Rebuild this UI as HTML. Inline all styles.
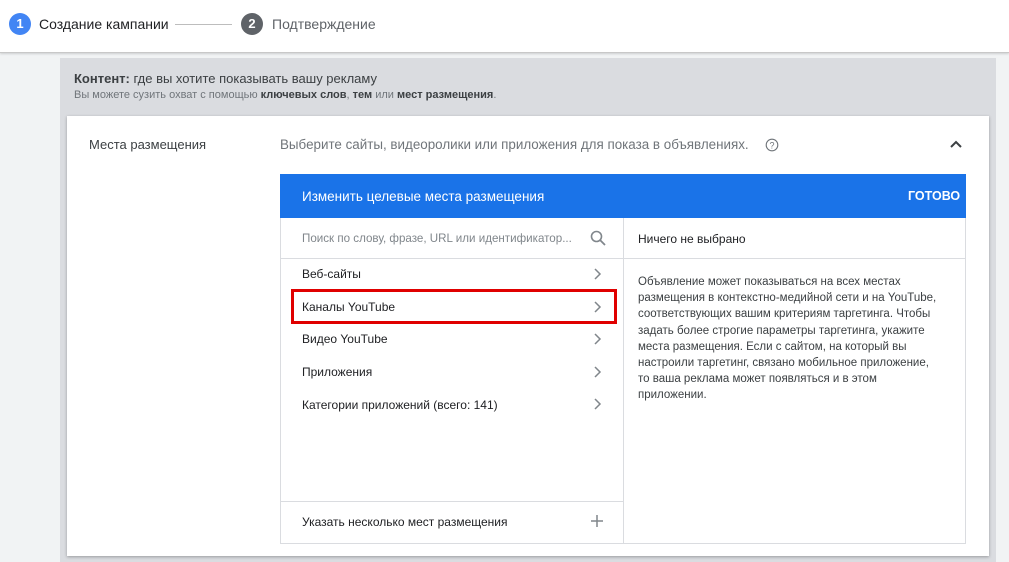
<!DOCTYPE html>
<html><head><meta charset="utf-8"><style>
*{margin:0;padding:0;box-sizing:border-box}
body{width:1009px;height:562px;overflow:hidden;background:#f1f3f4;font-family:"Liberation Sans",sans-serif;position:relative;font-size:13px;color:#202124}
.top{position:absolute;left:0;top:0;width:1009px;height:53px;background:#fff;border-bottom:1px solid #c8c8c8;box-shadow:0 1px 2px rgba(0,0,0,.15)}
.c{position:absolute;width:22px;height:22px;border-radius:50%;color:#fff;font-size:13px;text-align:center;line-height:22px;top:13px;font-weight:bold}
.a{position:absolute}
.panel{position:absolute;left:60px;top:58px;width:936px;height:504px;background:#dadce0}
.card{position:absolute;left:67px;top:116px;width:922px;height:440px;background:#fff;box-shadow:0 1px 3px rgba(0,0,0,.3)}
.tb{position:absolute;left:280px;top:218px;width:686px;height:326px;border:1px solid #dadce0;border-top:none}
.item{position:absolute;left:302px;font-size:12px;color:#202124}
.chev{position:absolute;left:592px}
</style></head><body>
<div class="top">
<div class="c" style="left:9px;background:#4285f4">1</div>
<div class="a" style="left:39px;top:16px;font-size:14px;color:#202124">Создание кампании</div>
<div class="a" style="left:175px;top:24px;width:57px;height:1px;background:#bdbdbd"></div>
<div class="c" style="left:241px;background:#5f6368">2</div>
<div class="a" style="left:272px;top:16px;font-size:14px;color:#5f6368">Подтверждение</div>
</div>
<div class="panel"></div>
<div class="a" style="left:74px;top:71px;font-size:13px;color:#3c4043"><b>Контент:</b> где вы хотите показывать вашу рекламу</div>
<div class="a" style="left:74px;top:89px;font-size:11px;color:#70757a">Вы можете сузить охват с помощью <b style="color:#3c4043">ключевых слов</b>, <b style="color:#3c4043">тем</b> или <b style="color:#3c4043">мест размещения</b>.</div>
<div class="card"></div>
<div class="a" style="left:89px;top:137px;font-size:13px;color:#3c4043">Места размещения</div>
<div class="a" style="left:280px;top:137px;font-size:13.4px;color:#70757a">Выберите сайты, видеоролики или приложения для показа в объявлениях.</div>
<svg class="a" style="left:765px;top:138px" width="14" height="14" viewBox="0 0 14 14"><circle cx="7" cy="7" r="5.8" fill="none" stroke="#70757a" stroke-width="1.1"/><text x="7" y="10.5" font-size="9" text-anchor="middle" fill="#70757a" font-family="Liberation Sans">?</text></svg>
<svg class="a" style="left:949px;top:139px" width="14" height="10" viewBox="0 0 14 10"><path d="M2 8L7 3L12 8" fill="none" stroke="#3c4043" stroke-width="2"/></svg>
<div class="a" style="left:280px;top:174px;width:686px;height:44px;background:#1a73e8"></div>
<div class="a" style="left:302px;top:189px;font-size:13.5px;color:#fff">Изменить целевые места размещения</div>
<div class="a" style="left:908px;top:189px;font-size:12.5px;color:#fff;font-weight:bold">ГОТОВО</div>
<div class="tb"></div>
<div class="a" style="left:623px;top:218px;width:1px;height:326px;background:#dadce0"></div>
<div class="a" style="left:280px;top:258px;width:686px;height:1px;background:#dadce0"></div>
<div class="a" style="left:280px;top:501px;width:343px;height:1px;background:#dadce0"></div>
<div class="a" style="left:302px;top:232px;font-size:11.6px;color:#80868b">Поиск по слову, фразе, URL или идентификатор...</div>
<svg class="a" style="left:589px;top:229px" width="18" height="18" viewBox="0 0 18 18"><circle cx="7.5" cy="7.5" r="5" fill="none" stroke="#80868b" stroke-width="1.6"/><path d="M11 11L16 16" stroke="#80868b" stroke-width="1.8"/></svg>
<div class="a" style="left:638px;top:232px;font-size:12px;color:#202124">Ничего не выбрано</div>
<div class="item" style="top:267px">Веб-сайты</div>
<div class="item" style="top:300px">Каналы YouTube</div>
<div class="item" style="top:332px">Видео YouTube</div>
<div class="item" style="top:365px">Приложения</div>
<div class="item" style="top:398px">Категории приложений (всего: 141)</div>
<div class="a" style="left:291px;top:289px;width:326px;height:35px;border:3px solid #e00000"></div>
<svg class="chev" style="top:267px" width="10" height="14"><path d="M3 2L8 7L3 12" fill="none" stroke="#80868b" stroke-width="1.5"/></svg>
<svg class="chev" style="top:300px" width="10" height="14"><path d="M3 2L8 7L3 12" fill="none" stroke="#80868b" stroke-width="1.5"/></svg>
<svg class="chev" style="top:332px" width="10" height="14"><path d="M3 2L8 7L3 12" fill="none" stroke="#80868b" stroke-width="1.5"/></svg>
<svg class="chev" style="top:365px" width="10" height="14"><path d="M3 2L8 7L3 12" fill="none" stroke="#80868b" stroke-width="1.5"/></svg>
<svg class="chev" style="top:397px" width="10" height="14"><path d="M3 2L8 7L3 12" fill="none" stroke="#80868b" stroke-width="1.5"/></svg>
<div class="a" style="left:638px;top:274px;width:303px;font-size:11.5px;line-height:16.2px;color:#3c4043">Объявление может показываться на всех местах размещения в контекстно-медийной сети и на YouTube, соответствующих вашим критериям таргетинга. Чтобы задать более строгие параметры таргетинга, укажите места размещения. Если с сайтом, на который вы настроили таргетинг, связано мобильное приложение, то ваша реклама может появляться и в этом приложении.</div>
<div class="a" style="left:302px;top:515px;font-size:12px;color:#202124">Указать несколько мест размещения</div>
<svg class="a" style="left:590px;top:514px" width="14" height="14"><path d="M7 1V13M1 7H13" stroke="#80868b" stroke-width="1.5"/></svg>
</body></html>
